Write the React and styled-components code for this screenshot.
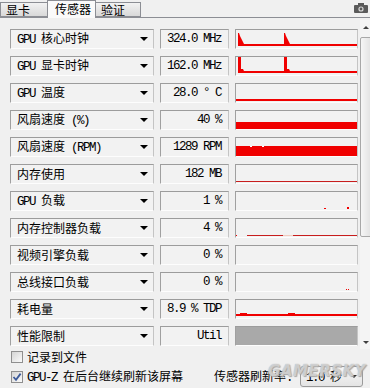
import styled, { createGlobalStyle } from "styled-components";

const GlobalStyle = createGlobalStyle`
  html, body {
    margin: 0;
    padding: 0;
    background: #f0f0f0;
  }
`;

const RED = "#f00000";

const mixed = (s) =>
  s
    .split(/([\x00-\x7f]+)/)
    .filter(Boolean)
    .map((p, i) => (/^[\x00-\x7f]+$/.test(p) ? <Lat key={i}>{p}</Lat> : p));

const graphs = [
  <polygon
    fill={RED}
    points="2,16 2,3 3,3 4,6 5,8 6,10 7,12 8,14 48,14 48,3 49,3 50,6 51,8 52,10 53,12 54,14 121,14 121,16"
  />,
  <polygon
    fill={RED}
    points="2,16 2,0 5,0 5,12 7,12 8,14 48,14 48,0 51,0 51,12 53,12 54,14 121,14 121,16"
  />,
  <rect x="0" y="15" width="121" height="2" fill={RED} />,
  <rect x="0" y="11" width="121" height="7" fill={RED} />,
  <>
    <rect x="0" y="8" width="121" height="10" fill={RED} />
    <rect x="14" y="8" width="2" height="1" fill="#fff" />
    <rect x="26" y="8" width="2" height="1" fill="#fff" />
  </>,
  <rect x="0" y="16" width="121" height="1" fill="#c81e1e" />,
  <>
    <rect x="88" y="16" width="2" height="1" fill={RED} />
    <rect x="111" y="15" width="2" height="2" fill={RED} />
  </>,
  <>
    <rect x="0" y="16" width="1" height="1" fill={RED} />
    <rect x="11" y="16" width="36" height="1" fill="#c81e1e" />
    <rect x="47" y="16" width="10" height="1" fill="#f3cbbf" />
    <rect x="57" y="16" width="64" height="1" fill="#c81e1e" />
  </>,
  null,
  <>
    <rect x="110" y="16" width="1" height="1" fill={RED} />
    <rect x="112" y="16" width="1" height="1" fill={RED} />
  </>,
  <>
    <rect x="0" y="14" width="121" height="2" fill={RED} />
    <rect x="4" y="13" width="7" height="1" fill={RED} />
    <rect x="52" y="13" width="7" height="1" fill={RED} />
  </>,
  "full",
];

const sensors = [
  ["GPU 核心时钟", "324.0 MHz"],
  ["GPU 显卡时钟", "162.0 MHz"],
  ["GPU 温度", "28.0 ° C"],
  ["风扇速度 (%)", "40 %"],
  ["风扇速度 (RPM)", "1289 RPM"],
  ["内存使用", "182 MB"],
  ["GPU 负载", "1 %"],
  ["内存控制器负载", "4 %"],
  ["视频引擎负载", "0 %"],
  ["总线接口负载", "0 %"],
  ["耗电量", "8.9 % TDP"],
  ["性能限制", "Util"],
];

function CameraIcon() {
  return (
    <svg width="14" height="10" viewBox="0 0 14 10">
      <rect x="0" y="2" width="14" height="8" rx="1" fill="#5a5a5a" />
      <rect x="4" y="0" width="6" height="3" fill="#5a5a5a" />
      <circle cx="7" cy="6" r="2.6" fill="#d8d8d8" />
      <circle cx="7" cy="6" r="1.4" fill="#5a5a5a" />
    </svg>
  );
}

function CheckMark() {
  return (
    <svg width="10" height="10" viewBox="0 0 10 10">
      <path d="M1.5 5 L4 7.8 L8.6 1.6" fill="none" stroke="#3c5a9a" strokeWidth="1.8" />
    </svg>
  );
}

export default function App() {
  return (
    <Window>
      <GlobalStyle />
      <TabBar>
        <Tab $w={48}>显卡</Tab>
        <Tab $w={49} $active>
          传感器
        </Tab>
        <Tab $w={46}>验证</Tab>
        <Camera>
          <CameraIcon />
        </Camera>
      </TabBar>

      <Main>
        <List>
          {sensors.map(([label, value], i) => (
            <Row key={label}>
              <LabelBox>
                <span>{mixed(label)}</span>
                <Arrow />
              </LabelBox>
              <ValueBox>{value}</ValueBox>
              <GraphBox $full={graphs[i] === "full"}>
                {graphs[i] && graphs[i] !== "full" && (
                  <svg width="121" height="18" viewBox="0 0 121 18">
                    {graphs[i]}
                  </svg>
                )}
              </GraphBox>
            </Row>
          ))}
        </List>
        <Scrollbar>
          <ScrollArrow $up />
          <Thumb />
          <ScrollArrow />
        </Scrollbar>
      </Main>

      <Footer>
        <CheckRow>
          <Check />
          <span>记录到文件</span>
        </CheckRow>
        <CheckRow>
          <Check>
            <CheckMark />
          </Check>
          <span>{mixed("GPU-Z 在后台继续刷新该屏幕")}</span>
          <Refresh>
            <span>{mixed("传感器刷新率:")}</span>
            <Select>
              <span>{mixed("1.0 秒")}</span>
              <SmallArrow />
            </Select>
          </Refresh>
        </CheckRow>
      </Footer>
      <Watermark>GAMERSKY</Watermark>
    </Window>
  );
}

const Window = styled.div`
  position: relative;
  width: 370px;
  height: 388px;
  overflow: hidden;
  background: #f0f0f0;
  color: #000;
  font-family: "Noto Sans CJK SC", sans-serif;
  font-size: 12px;
  line-height: 14px;
  display: flex;
  flex-direction: column;
`;

const Lat = styled.span`
  font-family: "Liberation Mono", monospace;
  font-size: 12.5px;
  letter-spacing: -1.5px;
`;

const TabBar = styled.div`
  height: 18px;
  display: flex;
  align-items: flex-end;
  border-bottom: 1px solid #8c8e94;
  box-sizing: border-box;
`;

const Tab = styled.div`
  width: ${(p) => p.$w}px;
  height: ${(p) => (p.$active ? 18 : 15)}px;
  box-sizing: border-box;
  padding-left: ${(p) => (p.$active ? 7 : 5)}px;
  padding-top: ${(p) => (p.$active ? 1 : 0)}px;
  margin-bottom: ${(p) => (p.$active ? -1 : 0)}px;
  border: 1px solid #8c8e94;
  border-bottom: ${(p) => (p.$active ? "none" : "1px solid #8c8e94")};
  margin-right: -1px;
  background: ${(p) =>
    p.$active ? "#fafafa" : "linear-gradient(#f2f2f2, #d9d9d9)"};
  font-size: 12px;
  line-height: 14px;
  position: relative;
  z-index: ${(p) => (p.$active ? 1 : 0)};
`;

const Camera = styled.div`
  margin-left: auto;
  align-self: flex-start;
  padding: 3px 2px 0 0;
  display: flex;
`;

const Main = styled.div`
  display: flex;
  height: 331px;
`;

const List = styled.div`
  padding: 11px 0 0 10px;
  display: flex;
  flex-direction: column;
  gap: 7px;
`;

const Row = styled.div`
  display: grid;
  grid-template-columns: 144px 69px 123px;
  column-gap: 6px;
  height: 20px;
`;

const Sunken = styled.div`
  box-sizing: border-box;
  height: 20px;
  border: 1px solid;
  border-color: #9c9c9c #c4c4c4 #fdfdfd #a0a0a0;
  background: #f2f2f2;
`;

const LabelBox = styled(Sunken)`
  display: flex;
  align-items: center;
  justify-content: space-between;
  padding: 0 5px 0 6px;
  white-space: nowrap;
`;

const Arrow = styled.span`
  width: 0;
  height: 0;
  border-left: 4px solid transparent;
  border-right: 4px solid transparent;
  border-top: 4px solid #000;
`;

const ValueBox = styled(Sunken)`
  display: flex;
  align-items: center;
  justify-content: flex-end;
  padding-right: 7px;
  font-family: "Liberation Mono", monospace;
  font-size: 12.5px;
  letter-spacing: -1.5px;
  white-space: nowrap;
`;

const GraphBox = styled(Sunken)`
  background: ${(p) => (p.$full ? "#a9a9a9" : "#f2f2f2")};
  overflow: hidden;
  svg {
    display: block;
  }
`;

const Scrollbar = styled.div`
  margin: 2px 0 0 2px;
  width: 12px;
  height: 329px;
  display: flex;
  flex-direction: column;
  align-items: flex-start;
  background: #f4f4f4;
`;

const ScrollArrow = styled.div`
  margin: ${(p) => (p.$up ? "6px 0 8px 3px" : "auto 0 5px 3px")};
  width: 0;
  height: 0;
  border-left: 3px solid transparent;
  border-right: 3px solid transparent;
  ${(p) =>
    p.$up ? "border-bottom: 3px solid #404040;" : "border-top: 3px solid #404040;"}
`;

const Thumb = styled.div`
  width: 12px;
  height: 200px;
  box-sizing: border-box;
  border: 1px solid #a8a8a8;
  border-radius: 2px;
  background: linear-gradient(90deg, #f6f6f6, #e2e2e2);
`;

const Footer = styled.div`
  padding: 1px 0 0 11px;
  display: flex;
  flex-direction: column;
  gap: 2px;
`;

const CheckRow = styled.div`
  display: flex;
  align-items: center;
  gap: 4px;
  min-height: 13px;
`;

const Check = styled.div`
  width: 12px;
  height: 12px;
  box-sizing: border-box;
  border: 1px solid #8f8f8f;
  background: linear-gradient(135deg, #d4d4d4, #fbfbfb);
  display: flex;
  align-items: center;
  justify-content: center;
`;

const Refresh = styled.div`
  margin-left: auto;
  margin-right: 7px;
  display: flex;
  align-items: center;
  gap: 8px;
`;

const Select = styled.div`
  width: 63px;
  height: 21px;
  box-sizing: border-box;
  border: 1px solid #9a9a9a;
  border-radius: 3px;
  background: linear-gradient(#f8f8f8, #e4e4e4);
  display: flex;
  align-items: center;
  justify-content: space-between;
  padding: 0 5px 0 5px;
`;

const SmallArrow = styled.span`
  width: 0;
  height: 0;
  border-left: 3px solid transparent;
  border-right: 3px solid transparent;
  border-top: 3px solid #333;
`;

const Watermark = styled.div`
  position: absolute;
  left: 268px;
  top: 364px;
  font-family: "DejaVu Sans", sans-serif;
  font-weight: bold;
  font-style: italic;
  font-size: 15px;
  letter-spacing: 0.5px;
  color: rgba(255, 255, 255, 0.5);
  text-shadow: 0 0 1px #999, 1px 1px 1px #aaa;
  pointer-events: none;
`;
